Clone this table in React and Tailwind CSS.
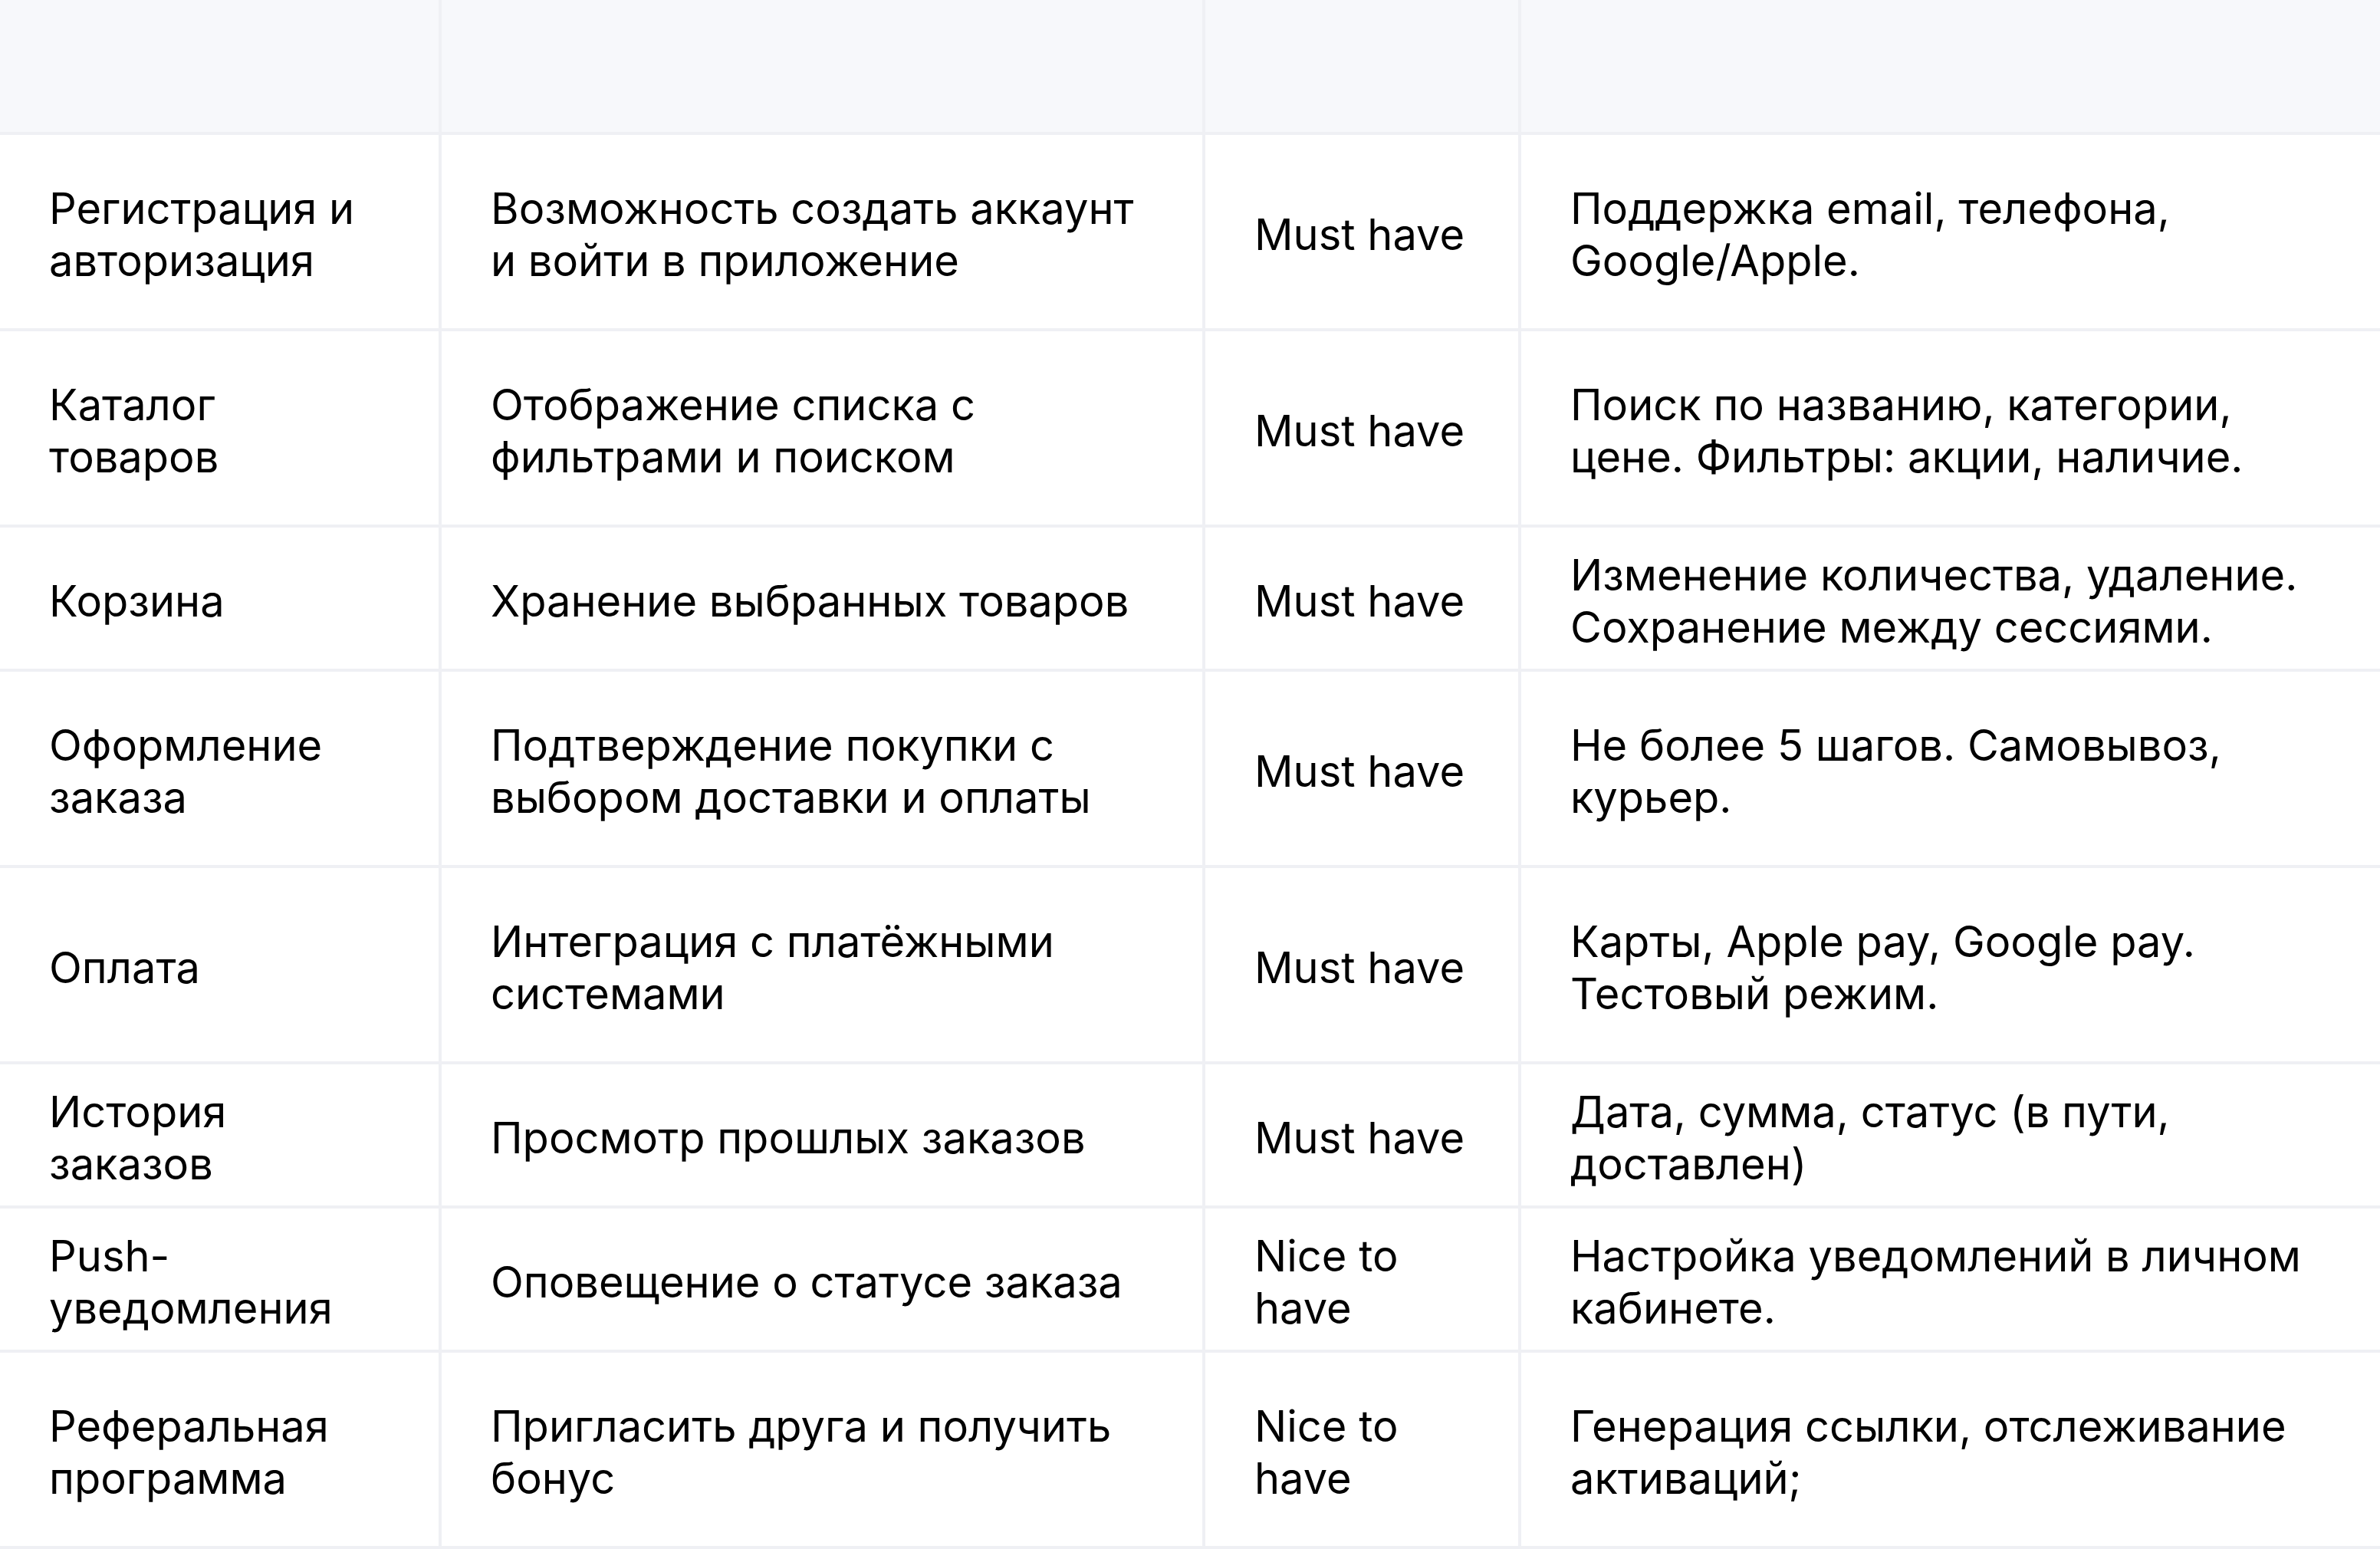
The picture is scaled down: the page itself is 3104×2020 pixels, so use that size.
import React from 'react'

const rows = [
  {
    feature: 'Регистрация и авторизация',
    description: 'Возможность создать аккаунт и войти в приложение',
    priority: 'Must have',
    notes: 'Поддержка email, телефона, Google/Apple.',
    tall: true,
  },
  {
    feature: 'Каталог товаров',
    description: 'Отображение списка с фильтрами и поиском',
    priority: 'Must have',
    notes: 'Поиск по названию, категории, цене. Фильтры: акции, наличие.',
    tall: true,
  },
  {
    feature: 'Корзина',
    description: 'Хранение выбранных товаров',
    priority: 'Must have',
    notes: 'Изменение количества, удаление. Сохранение между сессиями.',
    tall: false,
  },
  {
    feature: 'Оформление заказа',
    description: 'Подтверждение покупки с выбором доставки и оплаты',
    priority: 'Must have',
    notes: 'Не более 5 шагов. Самовывоз, курьер.',
    tall: true,
  },
  {
    feature: 'Оплата',
    description: 'Интеграция с платёжными системами',
    priority: 'Must have',
    notes: 'Карты, Apple pay, Google pay. Тестовый режим.',
    tall: true,
  },
  {
    feature: 'История заказов',
    description: 'Просмотр прошлых заказов',
    priority: 'Must have',
    notes: 'Дата, сумма, статус (в пути, доставлен)',
    tall: false,
  },
  {
    feature: 'Push-уведомления',
    description: 'Оповещение о статусе заказа',
    priority: 'Nice to have',
    notes: 'Настройка уведомлений в личном кабинете.',
    tall: false,
  },
  {
    feature: 'Реферальная программа',
    description: 'Пригласить друга и получить бонус',
    priority: 'Nice to have',
    notes: 'Генерация ссылки, отслеживание активаций;',
    tall: true,
  },
]

const grid = 'grid grid-cols-[576px_996px_412px_1fr] border-b-4 border-[#eff0f4]'
const cell = 'flex items-center px-16 pt-2 border-r-4 border-[#eff0f4]'

export default function App() {
  return (
    <div className="min-h-screen bg-white text-[56px] leading-[68px] text-black" style={{ fontFamily: 'Inter, "Noto Sans", sans-serif' }}>
      <div className={`${grid} h-[176px] bg-[#f7f8fb]`}>
        <div className="border-r-4 border-[#eff0f4]" />
        <div className="border-r-4 border-[#eff0f4]" />
        <div className="border-r-4 border-[#eff0f4]" />
        <div />
      </div>

      {rows.map((row) => (
        <div key={row.feature} className={`${grid} ${row.tall ? 'h-[256px]' : 'h-[188px]'}`}>
          <div className={cell}>{row.feature}</div>
          <div className={cell}>{row.description}</div>
          <div className={cell}>{row.priority}</div>
          <div className="flex items-center px-16 pt-2">{row.notes}</div>
        </div>
      ))}
    </div>
  )
}
